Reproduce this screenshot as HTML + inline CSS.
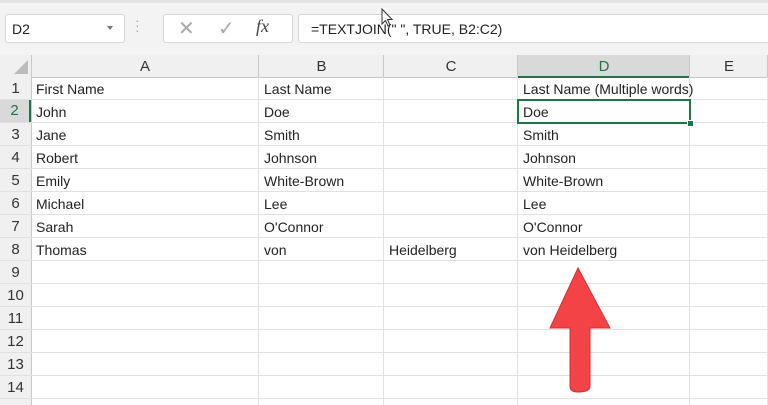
<!DOCTYPE html><html><head><style>
body{margin:0;width:768px;height:405px;overflow:hidden;background:#f3f3f3;font-family:"Liberation Sans",sans-serif;position:relative}
.a{position:absolute}
.box{background:#fff;border:1px solid #d6d6d6;border-radius:3px}
.t{font-size:14px;color:#222;white-space:nowrap}
</style></head><body>
<div class="a" style="left:0;top:0;width:768px;height:3px;background:#e2e2e2"></div>
<div class="a box" style="left:5px;top:14px;width:118px;height:27px"></div>
<div class="a t" style="left:12px;top:21px">D2</div>
<div class="a" style="left:107px;top:26px;border:3.5px solid transparent;border-top:4px solid #777"></div>
<div class="a" style="left:135px;top:18px;color:#aaa;font-size:14px;line-height:5px">·<br>·<br>·</div>
<div class="a box" style="left:153px;top:14px;width:122px;height:27px;left:163px;width:128px"></div>
<div class="a" style="left:178px;top:16px;font-size:20px;color:#aaa">✕</div>
<div class="a" style="left:218px;top:16px;font-size:20px;color:#aaa">✓</div>
<div class="a" style="left:256px;top:16px;font-size:18px;color:#444;font-style:italic;font-family:'Liberation Serif',serif">fx</div>
<div class="a box" style="left:298px;top:14px;width:476px;height:27px"></div>
<div class="a t" style="left:311px;top:21px">=TEXTJOIN(" ", TRUE, B2:C2)</div>
<svg class="a" style="left:380px;top:8px" width="14" height="22"><path d="M2 1 L2 16 L5.5 12.5 L8 18 L10 17 L7.5 11.5 L12 11.5 Z" fill="#fff" stroke="#333"/></svg>
<div class="a" style="left:0;top:55px;width:768px;height:350px;background:#fff"></div>
<div class="a" style="left:0;top:55px;width:768px;height:22px;background:#f0f0f0;border-bottom:1px solid #c8c8c8"></div>
<div class="a" style="left:0;top:55px;width:31px;height:350px;background:#f0f0f0;border-right:1px solid #c8c8c8"></div>
<div class="a" style="left:518px;top:55px;width:172px;height:21px;background:#d9d9d9;border-bottom:2px solid #217346"></div>
<svg class="a" style="left:14px;top:60px" width="14" height="14"><path d="M14 0 L14 14 L0 14 Z" fill="#bbb"/></svg>
<div id="g"></div>
<svg class="a" style="left:540px;top:262px" width="80" height="135"><path d="M38 6 L10 66 L30 66 L30 124 Q30 130 38 130 Q50 130 50 124 L50 66 L70 66 Z" fill="#f44347" stroke="#d03030" stroke-width="1"/></svg>
<script>
var cols=[[31,259,'A'],[259,384,'B'],[384,518,'C'],[518,690,'D'],[690,768,'E']];
var data=[["First Name","Last Name","","Last Name (Multiple words)"],["John","Doe","","Doe"],["Jane","Smith","","Smith"],["Robert","Johnson","","Johnson"],["Emily","White-Brown","","White-Brown"],["Michael","Lee","","Lee"],["Sarah","O'Connor","","O'Connor"],["Thomas","von","Heidelberg","von Heidelberg"]];
var h='';
cols.forEach(function(c,i){h+='<div class="a" style="left:'+(c[1]-1)+'px;top:55px;width:1px;height:22px;background:#c8c8c8"></div><div class="a" style="left:'+c[0]+'px;width:'+(c[1]-c[0])+'px;top:58px;text-align:center;font-size:15px;color:'+(i==3?'#217346':'#333')+'">'+c[2]+'</div>';
h+='<div class="a" style="left:'+(c[1]-1)+'px;top:77px;width:1px;height:328px;background:#e1e1e1"></div>';});
for(var r=0;r<14;r++){var y=77+r*23;
h+='<div class="a" style="left:0;top:'+(y+22)+'px;width:768px;height:1px;background:#e1e1e1"></div>';
h+='<div class="a" style="left:0;width:31px;top:'+(y+3)+'px;text-align:center;font-size:15px;color:'+(r==1?'#217346':'#333')+';'+(r==1?'background:#d9d9d9;height:22px;top:'+y+'px;line-height:22px;border-right:2px solid #217346;box-sizing:border-box':'')+'">'+(r+1)+'</div>';
if(data[r])data[r].forEach(function(t,i){if(t)h+='<div class="a t" style="left:'+(cols[i][0]+5)+'px;top:'+(y+4)+'px">'+t+'</div>';});}
h+='<div class="a" style="left:517px;top:99px;border:2px solid #217346;box-sizing:border-box;width:174px;height:25px"></div><div class="a" style="left:687px;top:120px;width:5px;height:5px;background:#217346;border:1px solid #fff"></div>';
document.getElementById('g').innerHTML=h;
</script>
</body></html>
